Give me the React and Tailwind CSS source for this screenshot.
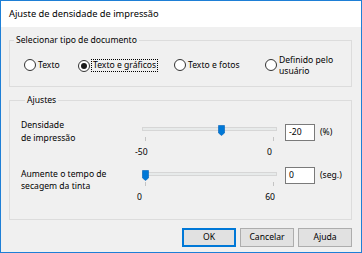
import React from 'react';

const Radio = ({ checked }) => (
  <span className="flex h-[12px] w-[12px] shrink-0 items-center justify-center rounded-full border border-[#333] bg-white">
    {checked && <span className="h-[6px] w-[6px] rounded-full bg-[#1a1a1a]" />}
  </span>
);

const Thumb = () => (
  <svg width="7" height="11" viewBox="0 0 7 11">
    <path d="M0.5 0.5 H6.5 V8 L3.5 10.5 L0.5 8 Z" fill="#0078d7" stroke="#005fb8" strokeWidth="0.6" />
  </svg>
);

const Slider = ({ pos, min, max, labelPad }) => (
  <div className="flex w-[146px] flex-col">
    <div className="relative ml-[8px] h-[11px] w-[135px]">
      <div className="absolute left-0 top-[2px] h-[4px] w-[135px] border border-[#d6d6d6] bg-[#e7eaea]" />
      <div className="absolute top-0" style={{ left: pos }}>
        <Thumb />
      </div>
    </div>
    <div className="relative mt-[1px] h-[4px]">
      <div className="absolute left-[11px] top-0 h-[4px] w-[1px] bg-[#c4c4c4]" />
      <div className="absolute left-[139px] top-0 h-[4px] w-[1px] bg-[#c4c4c4]" />
    </div>
    <div className={`mt-[5px] flex justify-between leading-[12px] ${labelPad}`}>
      <span>{min}</span>
      <span>{max}</span>
    </div>
  </div>
);

export default function App() {
  return (
    <div className="flex h-[253px] w-[362px] flex-col border border-[#1e7fd6] bg-[#f0f0f0] font-['Noto_Sans',sans-serif] text-[8.6px] text-black">
      <div className="flex h-[26px] shrink-0 items-center bg-white pl-[8px] text-[9.3px]">
        Ajuste de densidade de impressão
      </div>

      <div className="flex flex-col pl-[8px] pr-[9px]">
        <fieldset className="mt-[6px] h-[54px] border border-[#dcdcdc]">
          <legend className="ml-[4px] px-[2px] leading-[14px]">Selecionar tipo de documento</legend>
          <div className="mt-[12px] flex items-start pl-[14px] leading-[12px]">
            <div className="flex w-[54px] items-center gap-[2px]">
              <Radio />
              <span>Texto</span>
            </div>
            <div className="flex w-[96px] items-center">
              <Radio checked />
              <span className="ml-[1px] border border-dotted border-black px-[1px] leading-[11px]">Texto e gráficos</span>
            </div>
            <div className="flex w-[91px] items-center gap-[2px]">
              <Radio />
              <span>Texto e fotos</span>
            </div>
            <div className="flex items-start gap-[2px]">
              <Radio />
              <span className="-mt-[4px] leading-[11px]">Definido pelo<br />usuário</span>
            </div>
          </div>
        </fieldset>

        <fieldset className="mt-[6px] h-[127px] border border-[#dcdcdc] pl-[11px]">
          <legend className="ml-[4px] px-[2px] leading-[14px]">Ajustes</legend>

          <div className="mt-[12px] flex items-start">
            <div className="w-[113px] leading-[13px]">Densidade<br />de impressão</div>
            <div className="mt-[6px]">
              <Slider pos={76} min="-50" max="0" labelPad="pl-[1px] pr-[8px]" />
            </div>
            <div className="ml-[5px] mt-[5px] flex h-[17px] w-[30px] items-center border border-[#7a7a7a] bg-white pl-[3px]">-20</div>
            <div className="ml-[5px] mt-[5px] leading-[17px]">(%)</div>
          </div>

          <div className="mt-[9px] flex items-start">
            <div className="mt-[1px] w-[113px] leading-[12px]">Aumente o tempo de<br />secagem da tinta</div>
            <div className="mt-[3px]">
              <Slider pos={0} min="0" max="60" labelPad="pl-[3px] pr-[5px]" />
            </div>
            <div className="ml-[5px] flex h-[17px] w-[30px] items-center border border-[#7a7a7a] bg-white pl-[3px]">0</div>
            <div className="ml-[5px] leading-[17px]">(seg.)</div>
          </div>
        </fieldset>

        <div className="mt-[8px] flex justify-end gap-[4px]">
          <button className="flex h-[19px] w-[54px] items-center justify-center border border-[#0078d7] bg-[#e1e1e1] shadow-[inset_0_0_0_1px_#0078d7]">OK</button>
          <button className="flex h-[19px] w-[54px] items-center justify-center border border-[#adadad] bg-[#e1e1e1]">Cancelar</button>
          <button className="flex h-[19px] w-[54px] items-center justify-center border border-[#adadad] bg-[#e1e1e1]">Ajuda</button>
        </div>
      </div>
    </div>
  );
}
